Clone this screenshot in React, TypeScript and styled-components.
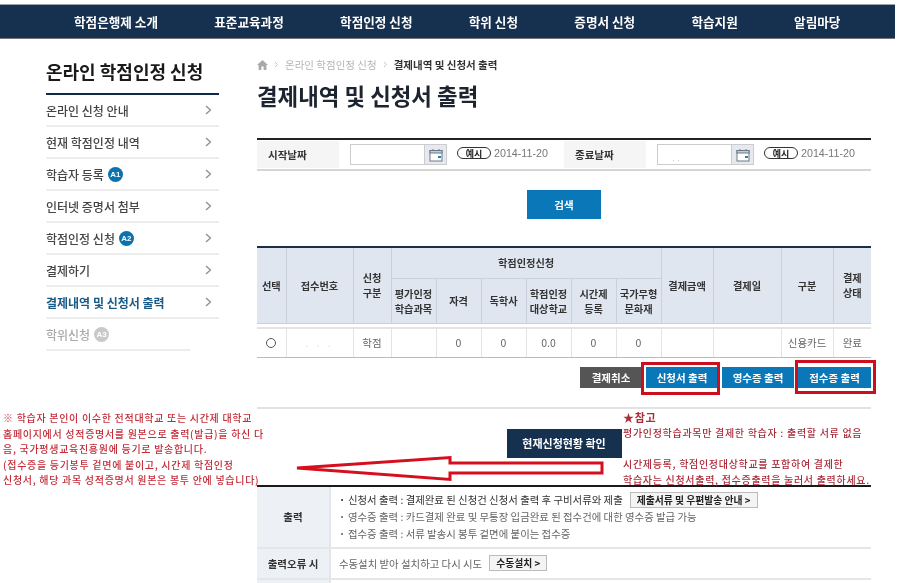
import React from "react";
import styled, { createGlobalStyle } from "styled-components";

const GlobalStyle = createGlobalStyle`
  html, body {
    margin: 0;
    padding: 0;
    background: #fff;
    overflow: hidden;
  }
  * {
    box-sizing: border-box;
  }
  body {
    font-family: "Noto Sans CJK KR", "Noto Sans", sans-serif;
    color: #444;
  }
`;

const Page = styled.div`
  position: relative;
  width: 900px;
  height: 583px;
  overflow: hidden;
  padding-top: 5px;
  filter: blur(0.3px);
`;

const Nav = styled.nav`
  display: flex;
  align-items: center;
  gap: 56.3px;
  width: 895px;
  height: 33px;
  padding-left: 74px;
  background: #16304f;
  box-shadow: 0 -1px 0 #9aa3ad, 0 1px 0 #777;
`;

const NavItem = styled.span`
  color: #fff;
  font-size: 12.6px;
  font-weight: 700;
  white-space: nowrap;
`;

const Body = styled.div`
  display: flex;
  align-items: flex-start;
  padding-left: 46px;
`;

const Sidebar = styled.aside`
  width: 173px;
  margin-right: 38px;
`;

const SideTitle = styled.h2`
  height: 57px;
  margin: 0;
  padding-top: 18px;
  border-bottom: 2px solid #10294a;
  color: #1a1a1a;
  font-size: 18px;
  font-weight: 700;
  line-height: 30px;
  white-space: nowrap;
`;

const SideItem = styled.div<{ $last?: boolean }>`
  display: flex;
  align-items: center;
  justify-content: space-between;
  width: ${(p) => (p.$last ? "144px" : "173px")};
  height: 32px;
  padding-right: 7px;
  border-bottom: 2px solid #ececec;
`;

const SideLabel = styled.span<{ $tone?: "active" | "muted" }>`
  display: flex;
  align-items: center;
  gap: 4px;
  color: ${(p) =>
    p.$tone === "active" ? "#1a5a86" : p.$tone === "muted" ? "#aaa" : "#444"};
  font-size: 12px;
  font-weight: ${(p) => (p.$tone === "active" ? 700 : 500)};
  white-space: nowrap;
`;

const Badge = styled.span<{ $muted?: boolean }>`
  display: inline-flex;
  align-items: center;
  justify-content: center;
  width: 15px;
  height: 15px;
  border-radius: 50%;
  background: ${(p) => (p.$muted ? "#c9c9c9" : "#0b72ad")};
  color: #fff;
  font-family: "Liberation Sans", sans-serif;
  font-size: 8px;
  font-weight: 700;
`;

const Main = styled.main`
  width: 614px;
`;

const Crumbs = styled.div`
  display: flex;
  align-items: center;
  gap: 6px;
  height: 15px;
  margin-top: 19px;
  color: #b5b5b5;
  font-size: 10.5px;
  white-space: nowrap;
`;

const CrumbNow = styled.span`
  color: #333;
  font-size: 10.5px;
  font-weight: 700;
`;

const PageTitle = styled.h1`
  height: 32px;
  margin: 7px 0 0;
  color: #1c2430;
  font-size: 22.4px;
  font-weight: 700;
  line-height: 32px;
  white-space: nowrap;
`;

const SearchBar = styled.div`
  display: flex;
  align-items: center;
  height: 33px;
  margin-top: 27px;
  border-top: 2px solid #222;
  border-bottom: 2px solid #d5d5d5;
`;

const SearchLabel = styled.div`
  display: flex;
  align-items: center;
  width: 82px;
  height: 27px;
  margin-right: 11px;
  padding-left: 11px;
  background: #f5f5f5;
  color: #333;
  font-size: 10.5px;
  font-weight: 700;
`;

const DateBox = styled.div`
  display: flex;
  width: 97px;
  height: 21px;
  border: 1px solid #ccc;
  background: #fff;
`;

const DateInput = styled.div`
  flex: 1;
  color: #ccc;
  font-size: 10px;
  line-height: 24px;
  padding-left: 14px;
`;

const DateIcon = styled.div`
  display: flex;
  align-items: center;
  justify-content: center;
  width: 22px;
  border-left: 1px solid #ccc;
  background: #e6eaf0;
`;

const Example = styled.span`
  display: inline-flex;
  align-items: center;
  justify-content: center;
  width: 34px;
  height: 12px;
  margin: 0 3px 3px 10px;
  border: 1px solid #333;
  border-radius: 7px;
  color: #222;
  font-size: 9px;
  font-weight: 700;
`;

const ExampleDate = styled.span`
  margin-bottom: 3px;
  color: #777;
  font-family: "Liberation Sans", sans-serif;
  font-size: 10.7px;
  white-space: nowrap;
`;

const SearchEnd = styled.div<{ $wide?: boolean }>`
  display: flex;
  align-items: center;
  width: ${(p) => (p.$wide ? "122px" : "auto")};
  margin-right: ${(p) => (p.$wide ? "-5px" : "0")};
`;

const SearchAction = styled.div`
  display: flex;
  justify-content: center;
  margin-top: 19px;
`;

const BlueButton = styled.button<{ $w: number; $h: number }>`
  width: ${(p) => p.$w}px;
  height: ${(p) => p.$h}px;
  padding: 0;
  border: 0;
  background: #0a78b8;
  color: #fff;
  font-family: inherit;
  font-size: 10.5px;
  font-weight: 700;
`;

const GreyButton = styled(BlueButton)`
  background: #555;
`;

const NavyButton = styled(BlueButton)`
  background: #16304f;
  font-size: 11px;
`;

const ResultTable = styled.table`
  width: 614px;
  margin-top: 27px;
  border-collapse: collapse;
  table-layout: fixed;
  border-top: 2px solid #1b2f4b;
`;

const HeadCell = styled.th<{ $h?: number }>`
  height: ${(p) => p.$h ?? 30}px;
  padding: 0;
  border: 1px solid #c9d1dc;
  border-top: 0;
  background: #dfe6f0;
  color: #333;
  font-size: 10.2px;
  font-weight: 700;
  line-height: 15px;
  &:first-child {
    border-left: 0;
  }
  &:last-child {
    border-right: 0;
  }
`;

const SpacerCell = styled.td`
  height: 5px;
  padding: 0;
  border-bottom: 2px solid #e4e4e4;
`;

const DataCell = styled.td`
  height: 29px;
  padding: 0;
  border-right: 1px solid #e4e4e4;
  border-bottom: 1px solid #bbb;
  color: #666;
  font-size: 10.5px;
  text-align: center;
  &:last-child {
    border-right: 0;
  }
`;

const Radio = styled.span`
  display: inline-block;
  width: 10px;
  height: 10px;
  margin-top: 4px;
  border: 1px solid #555;
  border-radius: 50%;
`;

const Masked = styled.span`
  color: #ddd;
  letter-spacing: 3px;
`;

const ActionBar = styled.div`
  display: flex;
  justify-content: flex-end;
  gap: 4px;
  margin-top: 9px;
`;

const StatusRow = styled.div`
  display: flex;
  justify-content: center;
  height: 80px;
  margin-top: 19px;
  padding-top: 20px;
  border-top: 2px solid #e2e2e2;
  border-bottom: 2px solid #1a1a1a;
`;

const InfoRow = styled.div`
  display: flex;
  border-bottom: 2px solid #e6e6e6;
`;

const InfoHead = styled.div`
  display: flex;
  flex: 0 0 74px;
  align-items: center;
  justify-content: center;
  border-right: 2px solid #e2e6ec;
  background: #edf1f6;
  color: #333;
  font-size: 10.5px;
  font-weight: 700;
`;

const InfoBody = styled.div<{ $h: number }>`
  display: flex;
  flex: 1;
  flex-direction: column;
  justify-content: center;
  gap: 1px;
  height: ${(p) => p.$h}px;
  padding-left: 8px;
  color: #666;
  font-size: 10.4px;
`;

const InfoLine = styled.div<{ $strong?: boolean }>`
  display: flex;
  align-items: center;
  height: 16px;
  color: ${(p) => (p.$strong ? "#333" : "#666")};
  white-space: nowrap;
  &::before {
    content: "·";
    width: 9px;
    font-weight: 700;
  }
`;

const PlainLine = styled(InfoLine)`
  &::before {
    content: none;
  }
`;

const SmallButton = styled.span`
  display: inline-flex;
  align-items: center;
  justify-content: center;
  height: 16px;
  margin-left: 7px;
  padding: 0 6px;
  border: 1px solid #bbb;
  background: #f4f4f4;
  color: #222;
  font-size: 9.8px;
  font-weight: 700;
`;

const Note = styled.div<{ $x: number; $y: number; $color: string }>`
  position: absolute;
  left: ${(p) => p.$x}px;
  top: ${(p) => p.$y}px;
  color: ${(p) => p.$color};
  font-size: 10px;
  font-weight: 500;
  line-height: 15.6px;
  letter-spacing: 0.7px;
  white-space: nowrap;
`;

const NoteHead = styled.div`
  font-size: 11px;
  font-weight: 700;
  line-height: 16px;
`;

const RedBox = styled.div<{ $x: number; $y: number; $w: number; $h: number }>`
  position: absolute;
  left: ${(p) => p.$x}px;
  top: ${(p) => p.$y}px;
  width: ${(p) => p.$w}px;
  height: ${(p) => p.$h}px;
  border: 3px solid #cc0f1e;
`;

const Arrow = styled.svg`
  position: absolute;
  left: 290px;
  top: 450px;
`;

const Chevron = () => (
  <svg width="7" height="10" viewBox="0 0 7 10" fill="none">
    <path d="M1 1l4.5 4L1 9" stroke="#8a8a8a" strokeWidth="1.2" />
  </svg>
);

const HomeIcon = () => (
  <svg width="11" height="10" viewBox="0 0 11 10">
    <path d="M5.5 0L0 5h1.6v5h2.8V6.6h2.2V10h2.8V5H11z" fill="#a9a9a9" />
  </svg>
);

const CrumbSep = () => (
  <svg width="5" height="7" viewBox="0 0 5 7" fill="none">
    <path d="M1 1l2.5 2.5L1 6" stroke="#c4c4c4" />
  </svg>
);

const CalendarIcon = () => (
  <svg width="14" height="14" viewBox="0 0 14 14" fill="none">
    <rect x="1" y="2.5" width="12" height="10.5" fill="#fff" stroke="#6c7a86" />
    <rect x="1" y="2.5" width="12" height="2.5" fill="#c5ccd4" stroke="#6c7a86" />
    <path d="M4 1v2M10 1v2" stroke="#6c7a86" />
    <rect x="9" y="8" width="3" height="2" fill="#2a7fb5" />
  </svg>
);

const sideItems: { label: string; badge?: string; tone?: "active" | "muted" }[] = [
  { label: "온라인 신청 안내" },
  { label: "현재 학점인정 내역" },
  { label: "학습자 등록", badge: "A1" },
  { label: "인터넷 증명서 첨부" },
  { label: "학점인정 신청", badge: "A2" },
  { label: "결제하기" },
  { label: "결제내역 및 신청서 출력", tone: "active" },
  { label: "학위신청", badge: "A3", tone: "muted" },
];

const navItems = [
  "학점은행제 소개",
  "표준교육과정",
  "학점인정 신청",
  "학위 신청",
  "증명서 신청",
  "학습지원",
  "알림마당",
];

const columnWidths = [29, 67, 38, 45, 45, 45, 45, 45, 45, 52, 68, 52, 38];

const App = () => {
  return (
    <Page>
      <GlobalStyle />
      <Nav>
        {navItems.map((item) => (
          <NavItem key={item}>{item}</NavItem>
        ))}
      </Nav>

      <Body>
        <Sidebar>
          <SideTitle>온라인 학점인정 신청</SideTitle>
          {sideItems.map((item) => (
            <SideItem key={item.label} $last={item.tone === "muted"}>
              <SideLabel $tone={item.tone}>
                {item.label}
                {item.badge && <Badge $muted={item.tone === "muted"}>{item.badge}</Badge>}
              </SideLabel>
              {item.tone !== "muted" && <Chevron />}
            </SideItem>
          ))}
        </Sidebar>

        <Main>
          <Crumbs>
            <HomeIcon />
            <CrumbSep />
            <span>온라인 학점인정 신청</span>
            <CrumbSep />
            <CrumbNow>결제내역 및 신청서 출력</CrumbNow>
          </Crumbs>
          <PageTitle>결제내역 및 신청서 출력</PageTitle>

          <SearchBar>
            <SearchLabel>시작날짜</SearchLabel>
            <DateBox>
              <DateInput />
              <DateIcon>
                <CalendarIcon />
              </DateIcon>
            </DateBox>
            <SearchEnd $wide>
              <Example>예시</Example>
              <ExampleDate>2014-11-20</ExampleDate>
            </SearchEnd>
            <SearchLabel>종료날짜</SearchLabel>
            <DateBox>
              <DateInput>. .</DateInput>
              <DateIcon>
                <CalendarIcon />
              </DateIcon>
            </DateBox>
            <SearchEnd>
              <Example>예시</Example>
              <ExampleDate>2014-11-20</ExampleDate>
            </SearchEnd>
          </SearchBar>

          <SearchAction>
            <BlueButton $w={74} $h={29}>검색</BlueButton>
          </SearchAction>

          <ResultTable>
            <colgroup>
              {columnWidths.map((w, i) => (
                <col key={i} width={w} />
              ))}
            </colgroup>
            <thead>
              <tr>
                <HeadCell rowSpan={2}>선택</HeadCell>
                <HeadCell rowSpan={2}>접수번호</HeadCell>
                <HeadCell rowSpan={2}>신청<br />구분</HeadCell>
                <HeadCell colSpan={6} $h={31}>학점인정신청</HeadCell>
                <HeadCell rowSpan={2}>결제금액</HeadCell>
                <HeadCell rowSpan={2}>결제일</HeadCell>
                <HeadCell rowSpan={2}>구분</HeadCell>
                <HeadCell rowSpan={2}>결제<br />상태</HeadCell>
              </tr>
              <tr>
                <HeadCell $h={45}>평가인정<br />학습과목</HeadCell>
                <HeadCell $h={45}>자격</HeadCell>
                <HeadCell $h={45}>독학사</HeadCell>
                <HeadCell $h={45}>학점인정<br />대상학교</HeadCell>
                <HeadCell $h={45}>시간제<br />등록</HeadCell>
                <HeadCell $h={45}>국가무형<br />문화재</HeadCell>
              </tr>
            </thead>
            <tbody>
              <tr>
                <SpacerCell colSpan={13} />
              </tr>
              <tr>
                <DataCell><Radio /></DataCell>
                <DataCell><Masked>. . .</Masked></DataCell>
                <DataCell>학점</DataCell>
                <DataCell />
                <DataCell>0</DataCell>
                <DataCell>0</DataCell>
                <DataCell>0.0</DataCell>
                <DataCell>0</DataCell>
                <DataCell>0</DataCell>
                <DataCell />
                <DataCell />
                <DataCell>신용카드</DataCell>
                <DataCell>완료</DataCell>
              </tr>
            </tbody>
          </ResultTable>

          <ActionBar>
            <GreyButton $w={62} $h={21}>결제취소</GreyButton>
            <BlueButton $w={72} $h={21}>신청서 출력</BlueButton>
            <BlueButton $w={72} $h={21}>영수증 출력</BlueButton>
            <BlueButton $w={73} $h={21}>접수증 출력</BlueButton>
          </ActionBar>

          <StatusRow>
            <NavyButton $w={115} $h={29}>현재신청현황 확인</NavyButton>
          </StatusRow>

          <InfoRow>
            <InfoHead>출력</InfoHead>
            <InfoBody $h={60}>
              <InfoLine $strong>
                신청서 출력 : 결제완료 된 신청건 신청서 출력 후 구비서류와 제출
                <SmallButton>제출서류 및 우편발송 안내 &gt;</SmallButton>
              </InfoLine>
              <InfoLine>영수증 출력 : 카드결제 완료 및 무통장 입금완료 된 접수건에 대한 영수증 발급 가능</InfoLine>
              <InfoLine>접수증 출력 : 서류 발송시 봉투 겉면에 붙이는 접수증</InfoLine>
            </InfoBody>
          </InfoRow>
          <InfoRow>
            <InfoHead>출력오류 시</InfoHead>
            <InfoBody $h={29}>
              <PlainLine>
                수동설치 받아 설치하고 다시 시도
                <SmallButton>수동설치 &gt;</SmallButton>
              </PlainLine>
            </InfoBody>
          </InfoRow>
          <InfoRow>
            <InfoHead />
            <InfoBody $h={30} />
          </InfoRow>
        </Main>
      </Body>

      <RedBox $x={641} $y={362} $w={79} $h={33} />
      <RedBox $x={795} $y={360} $w={81} $h={34} />

      <Arrow width="320" height="40" viewBox="0 0 320 40" fill="none">
        <path
          d="M7 18L160 7.5V13H312V23H160V29.5Z"
          fill="#fff"
          stroke="#d50f1d"
          strokeWidth="3"
        />
      </Arrow>

      <Note $x={3} $y={410} $color="#c42c38">
        ※ 학습자 본인이 이수한 전적대학교 또는 시간제 대학교
        <br />
        홈페이지에서 성적증명서를 원본으로 출력(발급)을 하신 다
        <br />
        음, 국가평생교육진흥원에 등기로 발송합니다.
        <br />
        (접수증을 등기봉투 겉면에 붙이고, 시간제 학점인정
        <br />
        신청서, 해당 과목 성적증명서 원본은 봉투 안에 넣습니다)
      </Note>

      <Note $x={623} $y={409} $color="#ac2c3a">
        <NoteHead>★참고</NoteHead>
        평가인정학습과목만 결제한 학습자 : 출력할 서류 없음
        <br />
        <br />
        시간제등록, 학점인정대상학교를 포함하여 결제한
        <br />
        학습자는 신청서출력, 접수증출력을 눌러서 출력하세요.
      </Note>
    </Page>
  );
};

export default App;
